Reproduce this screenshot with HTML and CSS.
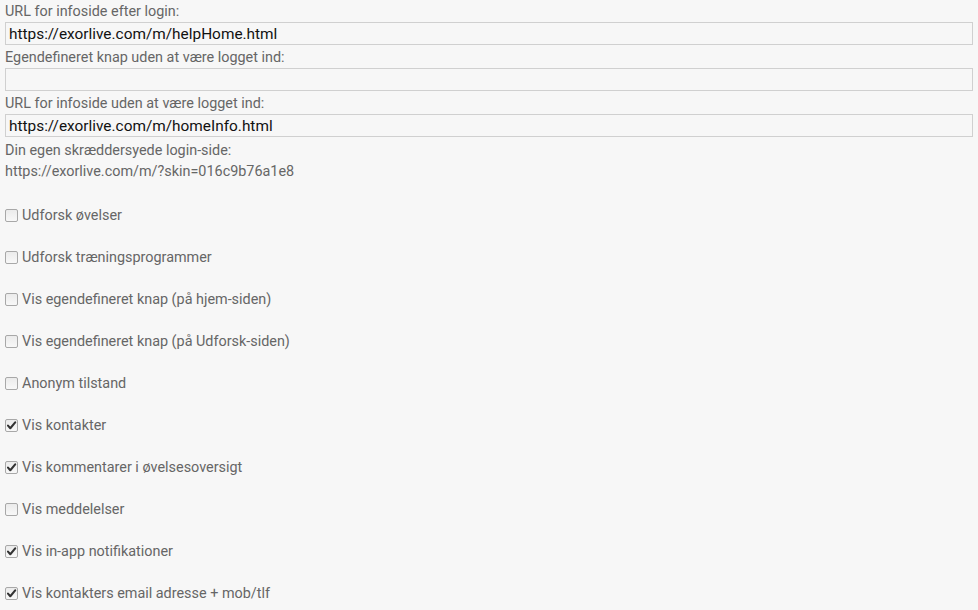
FILE: index.html
```html
<!DOCTYPE html>
<html>
<head>
<meta charset="utf-8">
<link rel="stylesheet" href="styles.css">
</head>
<body>
<div class="form">
  <label class="field-label">URL for infoside efter login:</label>
  <input class="text-input" type="text" value="https://exorlive.com/m/helpHome.html">
  <label class="field-label">Egendefineret knap uden at være logget ind:</label>
  <input class="text-input" type="text" value="">
  <label class="field-label">URL for infoside uden at være logget ind:</label>
  <input class="text-input" type="text" value="https://exorlive.com/m/homeInfo.html">
  <div class="field-label skin-label">Din egen skræddersyede login-side:</div>
  <div class="link-text">https://exorlive.com/m/?skin=016c9b76a1e8</div>

  <div class="checks">
    <label class="check-row"><span class="box"></span><span>Udforsk øvelser</span></label>
    <label class="check-row"><span class="box"></span><span>Udforsk træningsprogrammer</span></label>
    <label class="check-row"><span class="box"></span><span>Vis egendefineret knap (på hjem-siden)</span></label>
    <label class="check-row"><span class="box"></span><span>Vis egendefineret knap (på Udforsk-siden)</span></label>
    <label class="check-row"><span class="box"></span><span>Anonym tilstand</span></label>
    <label class="check-row"><span class="box"><svg viewBox="0 0 13 13" width="13" height="13"><path d="M3 6.6 L5.3 9.2 L10.2 3.4" fill="none" stroke="#333" stroke-width="2.1" stroke-linecap="round" stroke-linejoin="round"/></svg></span><span>Vis kontakter</span></label>
    <label class="check-row"><span class="box"><svg viewBox="0 0 13 13" width="13" height="13"><path d="M3 6.6 L5.3 9.2 L10.2 3.4" fill="none" stroke="#333" stroke-width="2.1" stroke-linecap="round" stroke-linejoin="round"/></svg></span><span>Vis kommentarer i øvelsesoversigt</span></label>
    <label class="check-row"><span class="box"></span><span>Vis meddelelser</span></label>
    <label class="check-row"><span class="box"><svg viewBox="0 0 13 13" width="13" height="13"><path d="M3 6.6 L5.3 9.2 L10.2 3.4" fill="none" stroke="#333" stroke-width="2.1" stroke-linecap="round" stroke-linejoin="round"/></svg></span><span>Vis in-app notifikationer</span></label>
    <label class="check-row"><span class="box"><svg viewBox="0 0 13 13" width="13" height="13"><path d="M3 6.6 L5.3 9.2 L10.2 3.4" fill="none" stroke="#333" stroke-width="2.1" stroke-linecap="round" stroke-linejoin="round"/></svg></span><span>Vis kontakters email adresse + mob/tlf</span></label>
  </div>
</div>
</body>
</html>
```
FILE: styles.css
```css
html, body {
  margin: 0;
  padding: 0;
  background: #f7f7f7;
}
body {
  font-family: Roboto, "Liberation Sans", sans-serif;
  font-size: 14.4px;
  color: #666;
}
.form {
  display: flex;
  flex-direction: column;
  padding: 1px 5px 0 5px;
  width: 968px;
}
.field-label {
  display: block;
  line-height: 20px;
  padding-top: 1px;
  height: 20px;
}
.skin-label {
  padding-top: 2px;
}
.text-input {
  box-sizing: border-box;
  height: 23px;
  width: 968px;
  margin: 0 0 2px 0;
  padding: 1px 3px;
  border: 1px solid #d0d0d0;
  background: #f7f7f7;
  font-family: Roboto, "Liberation Sans", sans-serif;
  font-size: 15.4px;
  color: #111;
  outline: none;
}
.link-text {
  line-height: 20px;
  margin-top: 1px;
}
.checks {
  display: flex;
  flex-direction: column;
  margin-top: 12px;
}
.check-row {
  display: flex;
  align-items: center;
  height: 42px;
}
.box {
  box-sizing: border-box;
  width: 13px;
  height: 13px;
  margin-right: 4px;
  border: 1px solid #a8a8a8;
  border-radius: 2px;
  background: linear-gradient(#ebebeb, #f8f8f8);
  display: flex;
  align-items: center;
  justify-content: center;
  overflow: hidden;
}
.box svg {
  flex: none;
  display: block;
}
```
